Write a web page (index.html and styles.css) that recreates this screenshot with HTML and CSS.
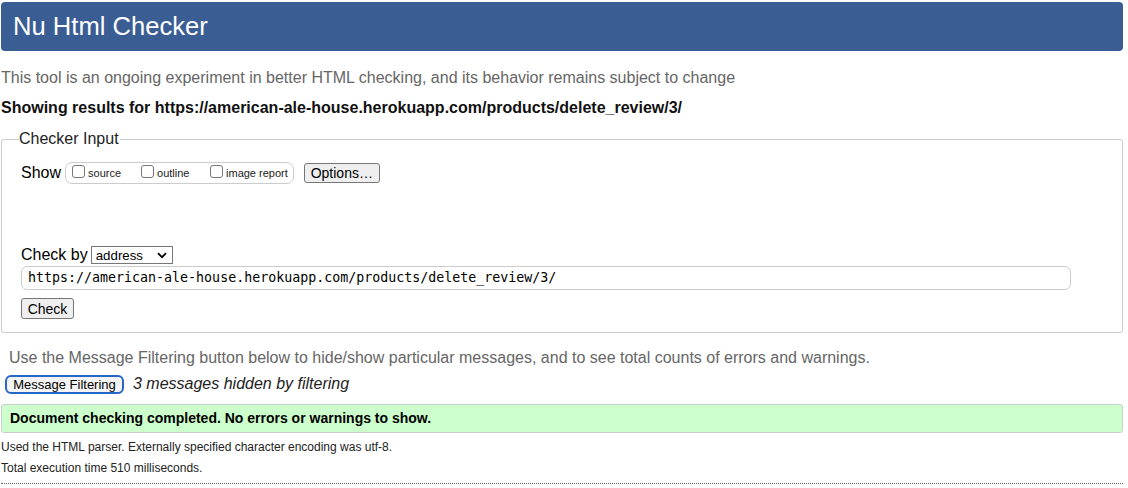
FILE: index.html
```html
<!DOCTYPE html>
<html lang="en">
<head>
<meta charset="utf-8">
<title>Nu Html Checker</title>
<link rel="stylesheet" href="styles.css">
</head>
<body>
<h1 class="title">Nu Html Checker</h1>
<p class="intro">This tool is an ongoing experiment in better HTML checking, and its behavior remains subject to change</p>
<p class="showing">Showing results for https://american-ale-house.herokuapp.com/products/delete_review/3/</p>
<fieldset class="checker">
  <legend class="legend">Checker Input</legend>
  <div class="show-row">
    <span class="show-label">Show</span>
    <span class="show-group">
      <label class="opt"><span class="box"></span>source</label>
      <label class="opt"><span class="box"></span>outline</label>
      <label class="opt"><span class="box"></span>image report</label>
    </span>
    <span class="btn options">Options…</span>
  </div>
  <div class="checkby-row">
    <span class="checkby-label">Check by</span>
    <span class="select">address<svg class="chev" width="10" height="7" viewBox="0 0 10 7"><path d="M1 1.2 L5 5.2 L9 1.2" fill="none" stroke="#000" stroke-width="1.8"/></svg></span>
  </div>
  <div class="url">https://american-ale-house.herokuapp.com/products/delete_review/3/</div>
  <span class="btn check">Check</span>
</fieldset>
<p class="filter-note">Use the Message Filtering button below to hide/show particular messages, and to see total counts of errors and warnings.</p>
<div class="filter-row">
  <span class="btn filter">Message Filtering</span>
  <span class="hidden-note">3 messages hidden by filtering</span>
</div>
<div class="success">Document checking completed. No errors or warnings to show.</div>
<p class="small">Used the HTML parser. Externally specified character encoding was utf-8.</p>
<p class="small">Total execution time 510 milliseconds.</p>
<div class="rule"></div>
</body>
</html>
```
FILE: styles.css
```css
html, body {
  margin: 0;
  padding: 0;
  background: #fff;
}
body {
  padding: 2px 5px 0 1px;
  font-family: "Liberation Sans", Arial, sans-serif;
  color: #000;
}
.title {
  margin: 0;
  height: 49px;
  box-sizing: border-box;
  padding: 9px 12px 0;
  background: #3a5e93;
  color: #fff;
  border-radius: 4px;
  font-size: 25.6px;
  font-weight: normal;
  line-height: 30px;
}
.intro {
  margin: 17px 0 0;
  font-size: 16px;
  line-height: 20px;
  color: #666;
}
.showing {
  margin: 10px 0 0;
  font-size: 16px;
  line-height: 20px;
  font-weight: bold;
  color: #111;
}
.checker {
  margin: 11px 0 0;
  padding: 13px 19px 13px;
  border: 1px solid #ccc;
  border-radius: 3px;
}
.legend {
  padding: 0 1px 0 0;
  margin-left: -2px;
  font-size: 16px;
  line-height: 20px;
  color: #222;
}
.show-row {
  display: flex;
  align-items: center;
  height: 22px;
}
.show-label {
  font-size: 16px;
  margin-right: 4px;
}
.show-group {
  display: flex;
  align-items: center;
  height: 20px;
  padding: 0 5px 0 6px;
  border: 1px solid #ccc;
  border-radius: 7px;
}
.opt {
  display: flex;
  align-items: center;
  font-size: 11px;
  color: #222;
}
.opt:nth-child(1) { width: 69px; }
.opt:nth-child(2) { width: 69px; }
.box {
  width: 11px;
  height: 11px;
  border: 1px solid #777;
  border-radius: 3px;
  margin-right: 3px;
  margin-top: -3px;
}
.btn {
  display: inline-flex;
  align-items: center;
  justify-content: center;
  box-sizing: border-box;
  border: 1px solid #767676;
  border-radius: 3px;
  background: #efefef;
  font-size: 14px;
  color: #000;
}
.options {
  margin-left: 10px;
  width: 76px;
  height: 20px;
}
.checkby-row {
  display: flex;
  align-items: center;
  margin-top: 61px;
  height: 20px;
}
.checkby-label {
  font-size: 16px;
  margin-right: 3px;
}
.select {
  display: inline-flex;
  align-items: center;
  justify-content: space-between;
  box-sizing: border-box;
  width: 82px;
  height: 18px;
  padding: 0 5px 0 4px;
  border: 1px solid #767676;
  font-size: 13.3px;
}
.url {
  margin-top: 1px;
  height: 24px;
  box-sizing: border-box;
  width: 1050px;
  padding: 0 6px;
  border: 1px solid #ccc;
  border-radius: 6px;
  font-family: "DejaVu Sans Mono", "Liberation Mono", monospace;
  font-size: 13.3px;
  line-height: 22px;
  color: #000;
}
.check {
  margin-top: 8px;
  width: 53px;
  height: 21px;
}
.filter-note {
  margin: 15px 0 0 8px;
  font-size: 16px;
  line-height: 20px;
  color: #666;
}
.filter-row {
  display: flex;
  align-items: center;
  margin: 6px 0 0 4px;
  height: 20px;
}
.filter {
  width: 119px;
  height: 19px;
  border: 2px solid #2566c9;
  border-radius: 6px;
  background: #f4f4f4;
  font-size: 13px;
  white-space: nowrap;
}
.hidden-note {
  margin-left: 9px;
  font-size: 16px;
  font-style: italic;
  color: #222;
}
.success {
  margin-top: 10px;
  height: 29px;
  box-sizing: border-box;
  padding: 0 8px;
  background: #ccffcc;
  border: 1px solid #ccc;
  border-radius: 3px;
  font-size: 14px;
  font-weight: bold;
  line-height: 27px;
  color: #000;
}
.small {
  margin: 7px 0 0;
  font-size: 12px;
  line-height: 15px;
  color: #222;
}
.small + .small {
  margin-top: 6px;
}
.rule {
  margin-top: 7px;
  border-top: 1px dotted #666;
}
```
